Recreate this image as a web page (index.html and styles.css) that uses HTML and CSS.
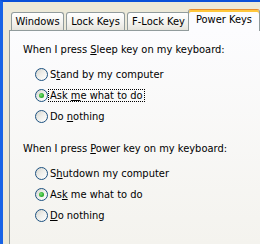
FILE: index.html
```html
<!DOCTYPE html>
<html>
<head>
<meta charset="utf-8">
<link rel="stylesheet" href="styles.css">
</head>
<body>
<div class="window">
  <div class="content">
    <div class="tabs">
      <div class="tab t-win">Windows</div>
      <div class="tab t-lock">Lock Keys</div>
      <div class="tab t-flock">F-Lock Key</div>
      <div class="tab selected">Power Keys</div>
    </div>
    <div class="panel">
      <div class="group">
        <div class="heading">When I press <u>S</u>leep key on my keyboard:</div>
        <div class="option"><span class="radio"></span><span class="label">S<u>t</u>and by my computer</span></div>
        <div class="option"><span class="radio on"></span><span class="label focus">Ask <u>m</u>e what to do</span></div>
        <div class="option"><span class="radio"></span><span class="label">Do <u>n</u>othing</span></div>
      </div>
      <div class="group second">
        <div class="heading">When I press <u>P</u>ower key on my keyboard:</div>
        <div class="option"><span class="radio"></span><span class="label">S<u>h</u>utdown my computer</span></div>
        <div class="option"><span class="radio on"></span><span class="label">As<u>k</u> me what to do</span></div>
        <div class="option"><span class="radio"></span><span class="label"><u>D</u>o nothing</span></div>
      </div>
    </div>
  </div>
</div>
</body>
</html>
```
FILE: styles.css
```css
html, body {
  margin: 0;
  padding: 0;
  overflow: hidden;
  width: 260px;
  height: 244px;
}
body {
  background: #ECE9D8;
  font-family: "DejaVu Sans Condensed", "Liberation Sans", sans-serif;
  font-size: 11px;
  line-height: 13px;
  color: #000;
}
.window {
  width: 260px;
  height: 244px;
  border-top: 2px solid #0A50D8;
  border-left: 3px solid #1763E6;
  box-sizing: border-box;
}
.content {
  padding: 7px 0 0 6px;
}
.tabs {
  display: flex;
  align-items: flex-end;
  padding-left: 2px;
  height: 22px;
}
.tab {
  box-sizing: border-box;
  height: 18px;
  margin-bottom: 1px;
  border: 1px solid #919B9C;
  border-bottom: none;
  border-radius: 3px 3px 0 0;
  background: linear-gradient(#FFFFFF, #F3F2EE 60%, #E6E4DC);
  display: flex;
  align-items: center;
  justify-content: center;
  white-space: nowrap;
  padding-bottom: 1px;
}
.t-win { width: 53px; margin-right: 2px; }
.t-lock { width: 59px; margin-right: 2px; }
.t-flock { width: 63px; }
.tab.selected {
  position: relative;
  z-index: 1;
  width: 72px;
  height: 22px;
  margin-left: -2px;
  margin-bottom: 0;
  border-top: 1px solid #E68B2C;
  box-shadow: inset 0 2px 0 #FFC73C;
  background: #FCFCFE;
  padding-bottom: 2px;
}
.panel {
  margin-top: -1px;
  width: 251px;
  height: 214px;
  border: 1px solid #919B9C;
  border-right: none;
  border-bottom: none;
  box-sizing: border-box;
  background: linear-gradient(#FCFCFE, #F4F3EE);
  padding: 12px 0 0 13px;
}
.heading {
  height: 13px;
  margin-bottom: 8px;
  white-space: nowrap;
}
.group.second {
  margin-top: 15px;
}
.option {
  height: 21px;
  display: flex;
  align-items: center;
  padding-left: 12px;
  white-space: nowrap;
}
.radio {
  box-sizing: border-box;
  width: 13px;
  height: 13px;
  border-radius: 50%;
  border: 1px solid #1C5180;
  background: linear-gradient(135deg, #D4D4CE 0%, #EDEDE9 45%, #FFFFFF 100%);
  display: flex;
  align-items: center;
  justify-content: center;
  margin-right: 1px;
  flex: none;
}
.radio.on::after {
  content: "";
  width: 5px;
  height: 5px;
  border-radius: 50%;
  background: radial-gradient(circle at 40% 40%, #7BE07A 0%, #2FB22F 55%, #1A8F1A 100%);
}
.label {
  padding: 0 1px;
  line-height: 11px;
}
.label.focus {
  outline: 1px dotted #000;
  outline-offset: 0;
}
u {
  text-decoration: underline;
  text-underline-offset: 1px;
}
```
